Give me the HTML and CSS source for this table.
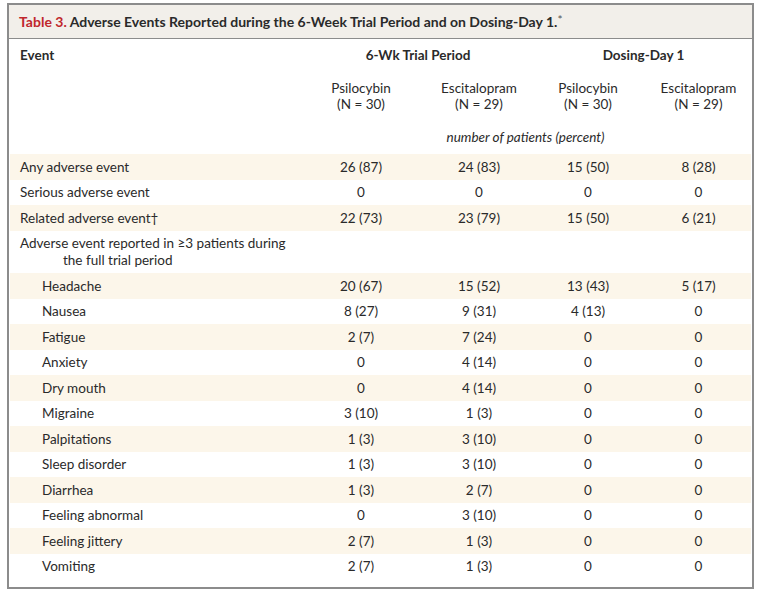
FILE: index.html
```html
<!DOCTYPE html>
<html>
<head>
<meta charset="utf-8">
<link rel="stylesheet" href="styles.css">
</head>
<body>
<div class="frame">
  <div class="caption"><span class="tnum">Table 3.</span> Adverse Events Reported during the 6-Week Trial Period and on Dosing-Day 1.<sup class="star">*</sup></div>
  <table class="data">
    <colgroup>
      <col class="c0"><col class="c1"><col class="c2"><col class="c3"><col class="c4">
    </colgroup>
    <thead>
      <tr class="h1">
        <th class="ev">Event</th>
        <th colspan="2" class="grp">6-Wk Trial Period</th>
        <th colspan="2" class="grp">Dosing-Day 1</th>
      </tr>
      <tr class="h2">
        <th></th>
        <th class="sub">Psilocybin<br>(N = 30)</th>
        <th class="sub">Escitalopram<br>(N = 29)</th>
        <th class="sub">Psilocybin<br>(N = 30)</th>
        <th class="sub last">Escitalopram<br>(N = 29)</th>
      </tr>
      <tr class="h3">
        <th></th>
        <th colspan="4" class="unit">number of patients (percent)</th>
      </tr>
    </thead>
    <tbody>
      <tr class="alt"><td>Any adverse event</td><td>26 (87)</td><td>24 (83)</td><td>15 (50)</td><td>8 (28)</td></tr>
      <tr><td>Serious adverse event</td><td>0</td><td>0</td><td>0</td><td>0</td></tr>
      <tr class="alt"><td>Related adverse event†</td><td>22 (73)</td><td>23 (79)</td><td>15 (50)</td><td>6 (21)</td></tr>
      <tr class="multi"><td class="hang">Adverse event reported in ≥3 patients during<br><span class="cont">the full trial period</span></td><td></td><td></td><td></td><td></td></tr>
      <tr class="alt"><td class="ind">Headache</td><td>20 (67)</td><td>15 (52)</td><td>13 (43)</td><td>5 (17)</td></tr>
      <tr><td class="ind">Nausea</td><td>8 (27)</td><td>9 (31)</td><td>4 (13)</td><td>0</td></tr>
      <tr class="alt"><td class="ind">Fatigue</td><td>2 (7)</td><td>7 (24)</td><td>0</td><td>0</td></tr>
      <tr><td class="ind">Anxiety</td><td>0</td><td>4 (14)</td><td>0</td><td>0</td></tr>
      <tr class="alt"><td class="ind">Dry mouth</td><td>0</td><td>4 (14)</td><td>0</td><td>0</td></tr>
      <tr><td class="ind">Migraine</td><td>3 (10)</td><td>1 (3)</td><td>0</td><td>0</td></tr>
      <tr class="alt"><td class="ind">Palpitations</td><td>1 (3)</td><td>3 (10)</td><td>0</td><td>0</td></tr>
      <tr><td class="ind">Sleep disorder</td><td>1 (3)</td><td>3 (10)</td><td>0</td><td>0</td></tr>
      <tr class="alt"><td class="ind">Diarrhea</td><td>1 (3)</td><td>2 (7)</td><td>0</td><td>0</td></tr>
      <tr><td class="ind">Feeling abnormal</td><td>0</td><td>3 (10)</td><td>0</td><td>0</td></tr>
      <tr class="alt"><td class="ind">Feeling jittery</td><td>2 (7)</td><td>1 (3)</td><td>0</td><td>0</td></tr>
      <tr><td class="ind">Vomiting</td><td>2 (7)</td><td>1 (3)</td><td>0</td><td>0</td></tr>
    </tbody>
  </table>
</div>
</body>
</html>
```
FILE: styles.css
```css
html, body {
  margin: 0;
  padding: 0;
  background: #ffffff;
}
body {
  font-family: Lato, "Noto Sans", sans-serif;
  color: #2a2a2a;
  font-size: 13.5px;
}
.frame {
  margin: 3px 0 0 7px;
  width: 743px;
  height: 582px;
  border: 2px solid #8c8c8c;
  background: #fff;
}
.caption {
  height: 33px;
  line-height: 33px;
  background: #f2efea;
  border-bottom: 1px solid #8c8c8c;
  padding-left: 10px;
  font-weight: bold;
  font-size: 14px;
  color: #2a2a2a;
}
.tnum { color: #c0272d; }
.star { font-size: 12px; vertical-align: 3px; line-height: 0; font-weight: normal; color: #555; }
.data {
  border-collapse: collapse;
  margin-left: 1px;
  width: 741px;
  table-layout: fixed;
}
.c0 { width: 290px; }
.c1 { width: 122px; }
.c2 { width: 114px; }
.c3 { width: 104px; }
.c4 { width: 111px; }
th, td { padding: 0; }
.h1 { height: 32px; }
.h1 th { font-weight: bold; vertical-align: middle; }
.ev { text-align: left; padding-left: 10px; }
.grp { text-align: center; }
.h2 { height: 49px; }
.sub { font-weight: normal; text-align: center; line-height: 16px; vertical-align: middle; }
.h3 { height: 34px; }
.unit { font-weight: normal; font-style: italic; text-align: center; }
tbody tr { height: 25.5px; }
tbody td { text-align: center; vertical-align: middle; }
tbody td:first-child { text-align: left; padding-left: 10px; }
tbody td:last-child, .last { padding-left: 6px; }
tbody tr.alt { background: #fcf6ea; }
tbody td.ind { padding-left: 32px; }
tr.multi { height: 42.5px; }
.hang { line-height: 17px; padding-top: 1px; }
.cont { padding-left: 43px; }
```
